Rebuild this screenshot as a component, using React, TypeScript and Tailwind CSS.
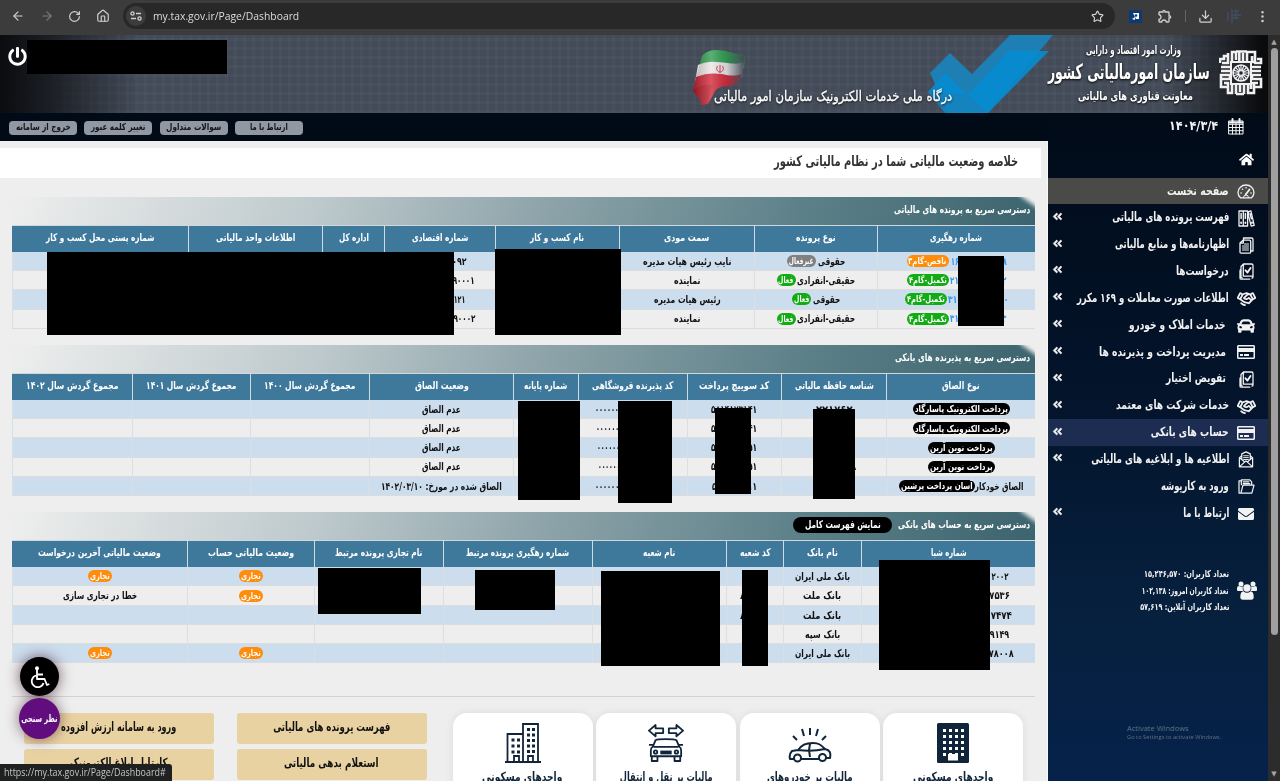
import React, { useLayoutEffect, useRef, useState } from "react";
import { FaHome, FaPowerOff, FaCar, FaRegCreditCard, FaEnvelope, FaAngleDoubleLeft } from "react-icons/fa";
import { PiHandshakeBold } from "react-icons/pi";
import { MdOutlineExtension } from "react-icons/md";
import { ArrowLeft, ArrowRight, RotateCw, House, Star, Download, EllipsisVertical } from "lucide-react";

/** A single line of text, condensed or widened to the given width. */
function Fit({ t, w, ltr }: { t: string; w: number; ltr?: boolean }) {
  const ref = useRef<HTMLSpanElement>(null);
  const [k, setK] = useState(1);
  useLayoutEffect(() => {
    if (ref.current && ref.current.offsetWidth) setK(w / ref.current.offsetWidth);
  }, [w, t]);
  return (
    <span className="inline-flex shrink-0 whitespace-nowrap" dir={ltr ? "ltr" : "rtl"} style={{ width: w }}>
      <span ref={ref} className={ltr ? "shrink-0 origin-left" : "shrink-0 origin-right"} style={{ transform: `scaleX(${k})` }}>
        {t}
      </span>
    </span>
  );
}

type Cell = [string, number] | React.ReactNode;
const isText = (c: Cell): c is [string, number] => Array.isArray(c) && typeof c[0] === "string";

function Pill({ t, w, c }: { t: string; w: number; c: string }) {
  return (
    <span className={`inline-flex h-[12px] items-center rounded-full px-[2px] text-[9px] leading-[12px] text-white ${c}`}>
      <Fit t={t} w={w} />
    </span>
  );
}

function Table({ cols, title, titleW, extra, head, rows }: { cols: string; title: string; titleW: number; extra?: React.ReactNode; head: [string, number][]; rows: Cell[][] }) {
  return (
    <section dir="rtl" className="w-[1023px]">
      <div className="relative flex h-[28px] items-center gap-[6px] overflow-hidden bg-[linear-gradient(110deg,#eeeeee_0%,#bdc9cc_30%,#8ba2a8_53%,#5b7f87_78%,#3c646e_100%)] pr-[5px] pb-[2px] text-[10.500px] font-bold text-white">
        <span className="absolute -top-[7px] -right-[12px] h-[14px] w-[26px] rotate-[35deg] bg-[#eeeeee] blur-[2px]" />
        <span className="relative flex items-center"><Fit t={title} w={titleW} /></span>
        {extra}
      </div>
      <div className={`grid h-[27px] border-t border-[#cfd8dc] bg-[#3e789b] text-[10.500px] font-bold text-white ${cols}`}>
        {head.map((h, i) => (
          <div key={i} className="flex items-center justify-center border-l border-[#cfdbe2] pb-[2px] last:border-l-0">
            <Fit t={h[0]} w={h[1]} />
          </div>
        ))}
      </div>
      {rows.map((r, i) => (
        <div key={i} className={`grid h-[19.200px] border-b border-[#dcdcdc] text-[10.500px] font-bold text-[#111] ${i % 2 ? "bg-[#eeeeee]" : "bg-[#ccddee]"} ${cols}`}>
          {r.map((c, j) => (
            <div key={j} className="flex items-center justify-center border-l border-[#dadfe3] leading-none">
              {isText(c) ? <Fit t={c[0]} w={c[1]} /> : c}
            </div>
          ))}
        </div>
      ))}
    </section>
  );
}

const Track = ({ n, w, b, bw, c }: { n: string; w: number; b: string; bw: number; c: string }) => (
  <span className="flex items-center gap-[2px] text-[#2d96f0]">
    <Fit t={n} w={w} />
    <Pill t={b} w={bw} c={c} />
  </span>
);
const Kind = ({ t, w, b, bw, c }: { t: string; w: number; b: string; bw: number; c: string }) => (
  <span className="flex items-center gap-[2px]">
    <Fit t={t} w={w} />
    <Pill t={b} w={bw} c={c} />
  </span>
);
const G = "bg-[#13ab13]";
const O = "bg-[#ff8c0a]";

const t1Rows: Cell[][] = [
  [<Track n="۱۶۰۰۰۰۰۰۰۰۰۰۰۸" w={56} b="ناقص-گام۳" bw={38} c={O} />, <Kind t="حقوقی" w={27} b="غیرفعال" bw={25} c="bg-[#808080]" />, ["نایب رئیس هیات مدیره", 88], "", ["۱۰۱۰۰۰۰۰۰۹۲", 53], "", "", ""],
  [<Track n="۲۱۰۰۰۰۰۰۰۰۰۰۲" w={56} b="تکمیل-گام۴" bw={38} c={G} />, <Kind t="حقیقی-انفرادی" w={58} b="فعال" bw={15} c={G} />, ["نماینده", 26], "", ["۱۰۱۰۰۰۰۰۰۰۰۹۰۰۰۱", 70], "", "", ""],
  [<Track n="۳۱۰۰۰۰۰۰۰۰۰۰۰" w={60} b="تکمیل-گام۴" bw={38} c={G} />, <Kind t="حقوقی" w={27} b="فعال" bw={15} c={G} />, ["رئیس هیات مدیره", 67], "", ["۱۰۱۰۰۰۰۰۰۰۱۲۱", 50], "", "", ""],
  [<Track n="۳۱۰۰۰۰۰۰۰۰۰۰۳" w={56} b="تکمیل-گام۴" bw={38} c={G} />, <Kind t="حقیقی-انفرادی" w={58} b="فعال" bw={15} c={G} />, ["نماینده", 26], "", ["۱۰۱۰۰۰۰۰۰۰۰۹۰۰۰۲", 71], "", "", ""],
];

const psp = (t: string, w: number) => (
  <span className="inline-flex h-[12px] items-center rounded-full bg-black px-[2px] text-[9.500px] text-white"><Fit t={t} w={w} /></span>
);
const none: Cell = ["عدم الصاق", 39];
const zeros = "۰۰۰۰۰۰۰۰۰۰۰۰۰۰۰۰۰۰۰";
const t2Rows: Cell[][] = [
  [psp("پرداخت الکترونیک پاسارگاد", 93), ["۲۲۱۷۶۲", 36], ["۵۸۱۴۱۷۳۱۴۱", 46], [zeros, 76], "", none, "", "", ""],
  [psp("پرداخت الکترونیک پاسارگاد", 93), "", ["۵۸۱۴۱۷۳۱۴۱", 46], [zeros, 74], "", none, "", "", ""],
  [psp("پرداخت نوین آرین", 63), "", ["۵۸۱۴۱۷۳۱۵۱", 46], [zeros, 73], "", none, "", "", ""],
  [psp("پرداخت نوین آرین", 63), ["۱۰۰۰۰۰۰۸", 44], ["۵۸۱۴۱۷۳۱۵۱", 46], [zeros, 71], "", none, "", "", ""],
  [<span className="flex items-center"><Fit t="الصاق خودکار" w={49} />{psp("آسان پرداخت پرشین", 72)}</span>, "", ["۵۸۱۴۱۷۳۱۱۱", 45], [zeros, 77], "", ["الصاق شده در مورخ: ۱۴۰۲/۰۳/۱۰", 121], "", "", ""],
];

const biz = <Pill t="تجاری" w={20} c={O} />;
const t3Rows: Cell[][] = [
  [["۱۰۰۰۰۰۰۰۰۰۰۰۰۰۰۰۰۰۰۰۰۰۰۰۲۰۰۲", 119], ["بانک ملی ایران", 55], "", "", "", "", biz, biz],
  [["۱۰۰۰۰۰۰۰۰۰۰۰۰۰۰۰۰۰۰۰۷۵۳۶", 123], ["بانک ملت", 38], ["۸۰۰۰۰", 29], "", "", "", biz, ["خطا در تجاری سازی", 74]],
  [["۱۰۰۰۰۰۰۰۰۰۰۰۰۰۰۰۰۰۰۰۷۴۷۴", 127], ["بانک ملت", 38], ["۸۰۰۰۰", 29], "", "", "", "", ""],
  [["۱۰۰۰۰۰۰۰۰۰۰۰۰۰۰۰۰۰۰۰۰۹۱۴۹", 121], ["بانک سپه", 35], "", "", "", "", "", ""],
  [["۱۰۰۰۰۰۰۰۰۰۰۰۰۰۰۰۰۰۰۰۰۷۸۰۰۸", 130], ["بانک ملی ایران", 55], "", "", "", "", biz, biz],
];

const line = { fill: "none", stroke: "currentColor", strokeWidth: 1.3, strokeLinejoin: "round" as const, strokeLinecap: "round" as const };
const DocLines = () => (
  <svg viewBox="0 0 15 17" className="h-[17px] w-[15px]" {...line}>
    <path d="M4.500 3V1h8q1.500 0 1.500 1.500V14h-2 M4 3.200h6.500q1.200 0 1.200 1.200V15q0 1.200-1.200 1.200H2.200Q1 16.200 1 15V6z M4.300 3.500V6.200H1.300" />
    <path d="M5.500 7h4M3.500 9h6M3.500 11h6M3.500 13h6" strokeWidth="1.100" />
  </svg>
);
const DocCheck = () => (
  <svg viewBox="0 0 15 17" className="h-[17px] w-[15px]" {...line}>
    <path d="M4.500 3V1h8q1.500 0 1.500 1.500V14q0 1-1 1.200 M4 3.200M4.500 1L2 3.500v10.300q0 1 1.200 1h0M4.300 3v10.200h9 M2 6.500Q1 6.500 1 8v7q0 1.200 1.200 1.200h8.500" />
    <path d="M6.500 7.300l2 2.200 3-4.500" strokeWidth="1.900" />
  </svg>
);
const Binders = () => (
  <svg viewBox="0 0 17 17" className="h-[17px] w-[17px]" {...line}>
    <path d="M1 1h4.300v15H1zM5.300 1h4.300v15H5.300zM10.600 1.600l2.300-.8 3.300 14.600-3 .8-2.600-10z" />
    <path d="M3.100 3.500v5M7.400 3.500v5M12.200 3.800l1.200 5" strokeWidth="1.500" />
    <path d="M3.100 12.500v.6M7.400 12.500v.6M14 12.500v.6" strokeWidth="1.800" />
  </svg>
);
const Dial = () => (
  <svg viewBox="0 0 18 15" className="h-[15px] w-[18px]" {...line}>
    <path d="M3.500 13.800Q1 11.500 1 8.500a8 7.500 0 0 1 16 0q0 3-2.500 5.300z" />
    <path d="M4 9h.1M5.500 5.200h.1M9 3.800h.1M14 9h.1" strokeWidth="1.600" />
    <path d="M8.700 10.500l3.800-5" strokeWidth="1.800" />
    <path d="M6.500 13.500q0-2.500 2.500-2.500t2.500 2.500" strokeWidth="1" />
  </svg>
);
const Crowd = () => (
  <svg viewBox="0 0 20 19" className="h-[19px] w-[20px]" fill="currentColor">
    <circle cx="4" cy="3" r="2.500" /><circle cx="16" cy="3" r="2.500" />
    <path d="M0 9.500V7q0-2 2-2l2 1 2-.5Q5 8 6.500 10H1zM20 9.500V7q0-2-2-2l-2 1-2-.5q1 2.500-.5 4.500H19z" />
    <circle cx="10" cy="7" r="3.700" />
    <path d="M3.300 16q0-5.500 3.200-5.700Q8 11.800 10 11.800t3.500-1.500q3.200.2 3.200 5.700 0 2.800-2.500 2.800H5.800Q3.300 18.800 3.300 16z" />
  </svg>
);
const MailX = () => (
  <svg viewBox="0 0 16 18" className="h-[17px] w-[16px]" {...line}>
    <path d="M1 7l2.500-2V3L8 .9 12.500 3v2L15 7v9.800H1z M1.200 7.200l4.800 4M14.800 7.200l-4.800 4M1.300 16.500L8 10.500l6.700 6M3.500 5v4M12.500 5v4" />
    <path d="M5.500 5h5M5.500 7h5M5.500 9h5" strokeWidth="1" />
  </svg>
);
const FolderDocs = () => (
  <svg viewBox="0 0 18 16" className="h-[15px] w-[17px]" {...line}>
    <path d="M3.500 15H1V2h2.500 M3.500 6V1h9l2 2v3 M3 15l2.200-8.500H17L14.700 15z M5.500 3h6M5.500 5h7" />
  </svg>
);
const Calendar = () => (
  <svg viewBox="0 0 16 17" className="h-[17px] w-[16px]" {...line} strokeWidth={1}>
    <path d="M1 3h14v13H1z M1 6.300h14M1 9.500h14M1 12.700h14M4.500 6v10M8 6v10M11.500 6v10" />
    <path d="M4.500 1v3.300M11.500 1v3.300M1.500 4.500h13" strokeWidth="2" />
  </svg>
);
const Wheelchair = () => (
  <svg viewBox="0 0 20 22" className="h-[22px] w-[20px]" fill="none" stroke="#fff" strokeWidth="1.800" strokeLinejoin="round">
    <circle cx="7" cy="2.300" r="2" fill="#fff" stroke="none" />
    <path d="M7 4v9h7.500l2.500 6 2.300-1M7 8.500h6M6 9.500A6 6 0 1 0 13.500 17" />
  </svg>
);

const menu: { t: string; w: number; icon: React.ReactNode; arrow?: boolean; indent?: boolean; bg?: string }[] = [
  { t: "صفحه نخست", w: 62, icon: <Dial />, bg: "bg-[#4a4a48]" },
  { t: "فهرست پرونده های مالیاتی", w: 117, icon: <Binders />, arrow: true },
  { t: "اظهارنامه‌ها و منابع مالیاتی", w: 114, icon: <DocLines />, arrow: true },
  { t: "درخواست‌ها", w: 53, icon: <DocCheck />, arrow: true },
  { t: "اطلاعات صورت معاملات و ۱۶۹ مکرر", w: 152, icon: <PiHandshakeBold size={19} />, arrow: true },
  { t: "خدمات املاک و خودرو", w: 97, icon: <FaCar size={18} />, arrow: true, indent: true },
  { t: "مدیریت پرداخت و پذیرنده ها", w: 127, icon: <FaRegCreditCard size={18} />, arrow: true, indent: true },
  { t: "تفویض اختیار", w: 60, icon: <DocCheck />, arrow: true, indent: true },
  { t: "خدمات شرکت های معتمد", w: 113, icon: <PiHandshakeBold size={19} />, arrow: true },
  { t: "حساب های بانکی", w: 78, icon: <FaRegCreditCard size={18} />, arrow: true, bg: "bg-[#1d2d52]" },
  { t: "اطلاعیه ها و ابلاغیه های مالیاتی", w: 138, icon: <MailX />, arrow: true },
  { t: "ورود به کارپوشه", w: 68, icon: <FolderDocs /> },
  { t: "ارتباط با ما", w: 46, icon: <FaEnvelope size={16} />, arrow: true },
];

function Emblem() {
  return (
    <svg viewBox="0 0 44 46" className="h-[46px] w-[44px]" fill="none" stroke="#f1f1f1" strokeWidth="2.600">
      <path d="M13 12V2h4v8M20.300 1v10M24 3v8M28 11V2h8v10h-3V6M9 3v10H3M2 17h9M2 21h9M6 9H1v4M13 33v10H9V33M17 35v9M21 35v7M25 35v9M29 35v8h6V33h-3v6M2 29h9v-4H2v12h7v-4H5M42 17h-9M42 21h-9M42 25h-9v4h9v8h-7v-4h4M38 9h4v4h-7M9 6H5v4M17 1.500h11M17 44h8" />
      <rect x="12" y="12" width="20" height="22" fill="#25282e" strokeWidth="2" />
      <circle cx="22" cy="23" r="8" strokeWidth="1.600" />
      <path d="M22 15v16M14 23h16M16.300 17.300l11.400 11.400M27.700 17.300L16.300 28.700M19 15.600l6 14.800M25 15.600l-6 14.800M14.700 20l14.600 6M14.700 26l14.600-6" strokeWidth="1.200" />
      <circle cx="22" cy="23" r="2.300" fill="#25282e" strokeWidth="1" />
    </svg>
  );
}

function Flag() {
  return (
    <svg viewBox="0 0 56 58" className="h-[58px] w-[56px]">
      <defs>
        <linearGradient id="fold" x1="0" x2="1">
          <stop offset="0" stopColor="#000" stopOpacity=".25" />
          <stop offset=".35" stopColor="#fff" stopOpacity=".22" />
          <stop offset=".65" stopColor="#434b58" stopOpacity=".15" />
          <stop offset="1" stopColor="#434b58" stopOpacity="1" />
        </linearGradient>
      </defs>
      <path d="M11 8C17 1 28 1 38 4s12 2 16 2l-1 14c-9 2-16-2-26-2-10 0-15 1-20 4z" fill="#2c9a4c" />
      <path d="M7 17c11-5 19-3 29-2 8 1 12 1 17-1l-2 15c-6 4-13 3-23 1-10-1-18 0-24 4z" fill="#e9e6e6" />
      <path d="M5 29c10-4 17-4 26-3 9 2 14 2 20 0-2 8-7 12-14 12-8 0-13 3-15 9l-5 9-7 1c0-8-7-11-8-14z" fill="#d32334" />
      <path d="M2 43c5-6 14-7 20-5-3 4-4 10-5 18l-7 1c0-8-7-11-8-14z" fill="#a81622" opacity=".5" />
      <path d="M5 29L11 8C17 1 28 1 38 4s12 2 16 2l-2 20c-2 8-8 12-15 12-8 0-13 3-15 9l-5 9-7 1c0-8-7-11-8-14z" fill="url(#fold)" />
      <path d="M29 17v8M26.500 18c-2 3 0 6 2.500 6s4.500-3 2.500-6" fill="none" stroke="#c9404c" strokeWidth="1" />
    </svg>
  );
}

const navy = { fill: "none", stroke: "#10243a", strokeWidth: 2 };
const wins = (xs: number[], ys: number[], s: number, fill: string) => xs.flatMap((x) => ys.map((y) => <rect key={`${x}-${y}`} x={x} y={y} width={s} height={s} fill={fill} stroke="none" />));
const IconTower = () => (
  <svg viewBox="0 0 32 40" className="h-[40px] w-[32px]">
    <rect width="32" height="40" rx="1.500" fill="#10243a" />
    {wins([6, 12, 18, 24], [6, 12, 18, 24, 30], 3, "#fff")}
    <rect x="11" y="31" width="10" height="6.500" fill="#fff" />
  </svg>
);
const IconCity = () => (
  <svg viewBox="0 0 36 40" className="h-[40px] w-[36px]" {...navy} strokeWidth={1.8}>
    <path d="M0 39h36M2.500 39V11H18M18 39V1h15v38M9 39v-6h5v6M23 39v-6h5v6" />
    {wins([6.5, 12], [15.5, 21.5, 27.5], 3, "#10243a")}
    {wins([22, 27], [5, 10.5, 16, 21.5, 27], 3, "#10243a")}
  </svg>
);
const IconTransfer = () => (
  <svg viewBox="0 0 38 40" className="h-[40px] w-[36px]" {...navy} strokeWidth={1.9} strokeLinejoin="round">
    <path d="M1 7l7-6v3.500h8v5H8V13zM37 7l-7-6v3.500h-8v5h8V13z" />
    <path d="M5 24l3-7c1-1.500 20-1.500 22 0l3 7c2 1 2 2 2 4v6H3v-6c0-2 0-3 2-4zM6 24h26M1 22h4M33 22h4M4 34v5h6v-5M28 34v5h6v-5" />
    <rect x="13" y="28" width="12" height="4" fill="#10243a" stroke="none" />
    <circle cx="8" cy="29.500" r="1.800" /><circle cx="30" cy="29.500" r="1.800" />
  </svg>
);
const IconCar = () => (
  <svg viewBox="0 0 44 36" className="h-[36px] w-[44px]" {...navy} strokeLinejoin="round">
    <path d="M16 9l-2-7M22 8V1M28 9l2-7M9 13L5 9M34 13l4-4" />
    <path d="M6 32H2c-1-4 0-6 2-8l6-1c4-5 7-7 15-7 6 0 8 2 12 6 5 1 6 4 5 9h-4M13 32h18M10 23c8 1 18 1 27-1M22 17l-1 6 1 7" />
    <circle cx="9.500" cy="31" r="3.500" /><circle cx="34.500" cy="30.500" r="3.500" />
  </svg>
);

const cards = [
  { t: "واحدهای مسکونی", w: 80, icon: <IconTower /> },
  { t: "مالیات بر خودروهای", w: 86, icon: <IconCar /> },
  { t: "مالیات بر نقل و انتقال", w: 93, icon: <IconTransfer /> },
  { t: "واحدهای مسکونی", w: 80, icon: <IconCity /> },
];

const masks = [
  "left-[27px] top-[40px] w-[200px] h-[34px]",
  "left-[47px] top-[252px] w-[407px] h-[83px]",
  "left-[495px] top-[249px] w-[126px] h-[86px]",
  "left-[958px] top-[256px] w-[46px] h-[70px]",
  "left-[518px] top-[401px] w-[62px] h-[99px]",
  "left-[618px] top-[401px] w-[54px] h-[102px]",
  "left-[715px] top-[408px] w-[36px] h-[86px]",
  "left-[813px] top-[409px] w-[42px] h-[90px]",
  "left-[879px] top-[560px] w-[111px] h-[110px]",
  "left-[742px] top-[570px] w-[26px] h-[96px]",
  "left-[601px] top-[571px] w-[119px] h-[95px]",
  "left-[475px] top-[570px] w-[80px] h-[40px]",
  "left-[318px] top-[568px] w-[103px] h-[46px]",
];

const GoldButton = ({ t, w }: { t: string; w: number }) => (
  <div className="flex h-[31px] items-center justify-center rounded-[3px] bg-[#e9d2a2] pb-[2px] text-[12.500px] font-bold text-[#111]"><Fit t={t} w={w} /></div>
);

export default function App() {
  return (
    <div className="relative flex h-[781px] w-[1280px] flex-col overflow-hidden bg-[#eeeeee] font-['DejaVu_Sans',sans-serif]">
      {/* Browser toolbar */}
      <div className="flex h-[35px] shrink-0 items-center bg-[#3c3c3c] pb-[3px] text-[#d0d0d0]">
        <div className="flex w-[123px] items-center gap-[14.500px] pl-[11px]">
          <ArrowLeft size={14} strokeWidth={2} />
          <ArrowRight size={14} strokeWidth={2} className="text-[#7d7d7d]" />
          <RotateCw size={13} strokeWidth={2.2} />
          <House size={14} strokeWidth={2} />
        </div>
        <div className="flex h-[26px] w-[992px] items-center rounded-full bg-[#282828] pr-[11px] pl-[3px] font-['Open_Sans',sans-serif] text-[11px] text-[#dcdcdc]">
          <span className="mr-[7px] flex h-[20px] w-[20px] items-center justify-center rounded-full bg-[#3c3c3c]">
            <svg viewBox="0 0 12 10" className="h-[10px] w-[12px]" fill="none" stroke="#d0d0d0" strokeWidth="1.300"><circle cx="2.500" cy="2.500" r="1.600" /><path d="M6 2.500h5M1 7.500h5" /><circle cx="9.500" cy="7.500" r="1.600" /></svg>
          </span>
          <Fit t="my.tax.gov.ir/Page/Dashboard" w={146} ltr />
          <Star size={13} className="ml-auto" />
        </div>
        <div className="flex flex-1 items-center pl-[14px]">
          <svg viewBox="0 0 13 13" className="h-[13px] w-[13px]"><rect width="13" height="13" fill="#0b3b70" /><path d="M4 3h6v6H7zM3 9l3-2v3z" fill="#fff" /><circle cx="7" cy="5.500" r="1.300" fill="#0b3b70" /></svg>
          <MdOutlineExtension size={16} className="ml-[15px]" />
          <span className="ml-[12px] h-[12px] w-px bg-[#666]" />
          <Download size={15} className="ml-[12px]" />
          <svg viewBox="0 0 16 16" className="ml-[13px] h-[16px] w-[16px]" stroke="#3f4c60" strokeWidth="1.600"><path d="M2 4v9M6 1v14M8 3h5M7 7h8M7 10h6M10 2v9" fill="none" /></svg>
          <EllipsisVertical size={15} className="ml-[13px]" />
        </div>
      </div>

      <div className="flex min-h-0 flex-1">
        <div className="flex w-[1268px] shrink-0 flex-col">
          {/* Banner */}
          <header dir="rtl" className="relative flex h-[78px] shrink-0 items-start bg-[#434b58] bg-[linear-gradient(90deg,#0b0c0f_0,rgba(20,22,27,0.85)_50px,transparent_140px,transparent_1165px,#0a0b0d_1262px),repeating-linear-gradient(0deg,rgba(255,255,255,0.025)_0_3px,transparent_3px_9px),repeating-linear-gradient(90deg,rgba(255,255,255,0.025)_0_3px,transparent_3px_9px)] pr-[5px] text-white">
            <svg viewBox="0 0 130 78" className="absolute top-0 left-[926px] h-[78px] w-[130px]">
              <path d="M84 0h43L62 78H22L4 38l20-20 22 21z" fill="#1d7fb3" />
              <path d="M83 16h40L62 78H19L2 57l17-19 23 22z" fill="#078cd0" opacity=".9" />
              <path d="M2 57l40 3 20 18H19z" fill="#2379ab" opacity=".45" />
            </svg>
            <div className="pt-[15px]"><Emblem /></div>
            <div className="relative mr-[9px] flex w-[162px] flex-col items-center font-bold [text-shadow:0_1px_3px_#000]">
              <div className="mr-[-10px] flex h-[15px] items-center pt-[16px] text-[11.500px]"><Fit t="وزارت امور اقتصاد و دارایی" w={95} /></div>
              <div className="mt-[7px] flex h-[26px] items-center pt-[2px] text-[21px] leading-none"><Fit t="سازمان امورمالیاتی کشور" w={162} /></div>
              <div className="mr-[-12px] flex h-[22px] items-center pt-[2px] text-[12px] leading-none"><Fit t="معاونت فناوری های مالیاتی" w={115} /></div>
            </div>
            <div className="relative z-10 mr-[96px] flex h-[78px] items-end pb-[8px] text-[14px] leading-[18px] [-webkit-text-stroke:0.3px_white] [text-shadow:0_1px_3px_#000]"><Fit t="درگاه ملی خدمات الکترونیک سازمان امور مالیاتی" w={238} /></div>
            <div className="mr-[-33px] pt-[13px]"><Flag /></div>
            <div className="mr-auto pt-[12px] pl-[8px]"><FaPowerOff size={19} /></div>
          </header>

          <div className="flex min-h-0 flex-1">
            <div className="flex w-[1048px] flex-col">
              {/* Quick links */}
              <nav className="flex h-[28px] shrink-0 items-center gap-[7.300px] bg-[#010b18] pt-[2px] pl-[9px] text-[9.500px] font-bold text-[#14171c]">
                {([["خروج از سامانه", 55], ["تغییر کلمه عبور", 55], ["سوالات متداول", 55], ["ارتباط با ما", 38]] as [string, number][]).map(([t, w]) => (
                  <span key={t} className="flex h-[14px] w-[68px] items-center justify-center rounded-[4px] bg-[#9198a2] pb-[1px]"><Fit t={t} w={w} /></span>
                ))}
              </nav>

              <main dir="rtl" className="flex min-h-0 flex-1 flex-col border-r border-[#f8f8f8] bg-[#eeeeee] pt-[7px]">
                <h1 className="mr-[6px] flex h-[30px] shrink-0 items-center bg-white pr-[23px] pb-[2px] text-[14.500px] font-bold text-[#333]"><Fit t="خلاصه وضعیت مالیاتی شما در نظام مالیاتی کشور" w={244} /></h1>
                <div className="flex shrink-0 flex-col gap-[16.300px] pt-[19px] pr-[12px]">
                  <Table
                    title="دسترسی سریع به پرونده های مالیاتی" titleW={136}
                    cols="grid-cols-[158px_123px_135px_124px_111px_62px_134px_176px]"
                    head={[["شماره رهگیری", 52], ["نوع پرونده", 40], ["سمت مودی", 45], ["نام کسب و کار", 54], ["شماره اقتصادی", 56], ["اداره کل", 30], ["اطلاعات واحد مالیاتی", 79], ["شماره پستی محل کسب و کار", 108]]}
                    rows={t1Rows}
                  />
                  <Table
                    title="دسترسی سریع به پذیرنده های بانکی" titleW={135}
                    cols="grid-cols-[149px_105px_94px_109px_65px_144px_119px_118px_120px]"
                    head={[["نوع الصاق", 38], ["شناسه حافظه مالیاتی", 79], ["کد سوییچ پرداخت", 70], ["کد پذیرنده فروشگاهی", 81], ["شماره پایانه", 43], ["وضعیت الصاق", 54], ["مجموع گردش سال ۱۴۰۰", 91], ["مجموع گردش سال ۱۴۰۱", 90], ["مجموع گردش سال ۱۴۰۲", 92]]}
                    rows={t2Rows}
                  />
                  <Table
                    title="دسترسی سریع به حساب های بانکی" titleW={132}
                    extra={<span className="flex h-[16px] w-[99px] items-center justify-center rounded-full bg-black pb-[1px]"><Fit t="نمایش فهرست کامل" w={76} /></span>}
                    cols="grid-cols-[174px_78px_57px_134px_149px_129px_127px_175px]"
                    head={[["شماره شبا", 36], ["نام بانک", 31], ["کد شعبه", 31], ["نام شعبه", 32], ["شماره رهگیری پرونده مرتبط", 103], ["نام تجاری پرونده مرتبط", 87], ["وضعیت مالیاتی حساب", 86], ["وضعیت مالیاتی آخرین درخواست", 123]]}
                    rows={t3Rows}
                  />
                </div>
                <hr className="mt-[32.500px] mr-[12px] ml-[12px] shrink-0 border-[#d2d2d2]" />
                <div className="flex shrink-0 pt-[16px] pr-[24px]">
                  <div className="flex gap-[3.500px]">
                    {cards.map((c, i) => (
                      <div key={i} className="flex h-[90px] w-[140px] flex-col items-center rounded-[14px] bg-white pt-[9px] text-[12.500px] font-bold text-[#10243a] shadow-[0_0_8px_rgba(0,0,0,0.08)]">
                        <span className="flex h-[41px] items-end">{c.icon}</span>
                        <span className="flex pt-[5px]"><Fit t={c.t} w={c.w} /></span>
                      </div>
                    ))}
                  </div>
                  <div className="mr-[26px] grid h-[67px] grid-cols-[190px_190px] gap-x-[23px] gap-y-[5px]">
                    <GoldButton t="فهرست پرونده های مالیاتی" w={117} />
                    <GoldButton t="ورود به سامانه ارزش افزوده" w={115} />
                    <GoldButton t="استعلام بدهی مالیاتی" w={95} />
                    <GoldButton t="کارتابل ابلاغ الکترونیک" w={98} />
                  </div>
                </div>
              </main>
            </div>

            {/* Sidebar */}
            <aside dir="rtl" className="flex w-[220px] flex-col bg-[linear-gradient(180deg,#010b18_0%,#03132a_40%,#06203e_75%,#06224a_100%)] text-[#f2f2f2]">
              <div className="flex h-[28px] shrink-0 items-center gap-[10px] pr-[24px] pb-[2px] text-[13px] font-bold"><Calendar /><Fit t="۱۴۰۴/۳/۴" w={49} /></div>
              <div className="flex h-[36.500px] shrink-0 items-center pr-[14px] text-white"><FaHome size={15} /></div>
              {menu.map((m, i) => (
                <div key={i} className={`flex h-[26.850px] shrink-0 items-center pr-[12px] pl-[4px] text-[12.500px] font-bold ${m.bg ?? ""}`}>
                  <span className="flex w-[20px] items-center justify-center pt-[1px]">{m.icon}</span>
                  <span className={m.indent ? "mr-[10px] flex" : "mr-[7px] flex"}><Fit t={m.t} w={m.w} /></span>
                  {m.arrow && <FaAngleDoubleLeft size={11} className="mr-auto mb-[3px]" stroke="currentColor" strokeWidth="22" />}
                </div>
              ))}
              <div className="mt-[39.500px] flex items-center gap-[8px] pr-[11px] text-[9.500px] font-bold">
                <Crowd />
                <div className="flex flex-col">
                  <span className="flex h-[16.500px] items-center"><Fit t="تعداد کاربران: ۱۵,۲۴۶,۵۷۰" w={85} /></span>
                  <span className="flex h-[16.500px] items-center"><Fit t="تعداد کاربران امروز: ۱۰۲,۱۳۸" w={87} /></span>
                  <span className="flex h-[16.500px] items-center"><Fit t="تعداد کاربران آنلاین: ۵۷,۶۱۹" w={89} /></span>
                </div>
              </div>
              <div dir="ltr" className="mt-[109px] flex flex-col pl-[79px] font-['Open_Sans',sans-serif] text-[#5f7186]">
                <span className="flex text-[7.500px] leading-[9px]"><Fit t="Activate Windows" w={62} ltr /></span>
                <span className="flex text-[5.500px] leading-[8px]"><Fit t="Go to Settings to activate Windows." w={94} ltr /></span>
              </div>
            </aside>
          </div>
        </div>

        {/* Scrollbar */}
        <div className="flex w-[12px] flex-col items-center bg-[#2c2c2c]">
          <span className="mt-[3px] text-[7px] leading-[8px] text-[#a5a5a5]">▲</span>
          <span className="mt-[2px] h-[587px] w-[7px] rounded-full bg-[#9f9f9f]" />
          <span className="mt-auto mb-[3px] text-[7px] leading-[8px] text-[#a5a5a5]">▼</span>
        </div>
      </div>

      {/* Redaction blocks */}
      {masks.map((m) => <div key={m} className={`absolute bg-black ${m}`} />)}

      {/* Floating buttons */}
      <div className="absolute top-[657px] left-[20px] flex h-[39px] w-[39px] items-center justify-center rounded-full bg-black text-white shadow-[0_0_14px_rgba(60,20,40,0.7)]"><Wheelchair /></div>
      <div className="absolute top-[698px] left-[19px] flex h-[41px] w-[41px] items-center justify-center rounded-full bg-[#620d7d] text-[10px] font-bold text-white shadow-[0_0_14px_rgba(60,20,40,0.6)]"><Fit t="نظر سنجی" w={36} /></div>
      <div className="absolute top-[764px] left-0 flex h-[17px] w-[172px] items-center rounded-tr-[3px] bg-[#1f2020] pl-[4px] font-['Open_Sans',sans-serif] text-[10px] text-[#c4c4c4]"><Fit t="https://my.tax.gov.ir/Page/Dashboard#" w={162} ltr /></div>
    </div>
  );
}
